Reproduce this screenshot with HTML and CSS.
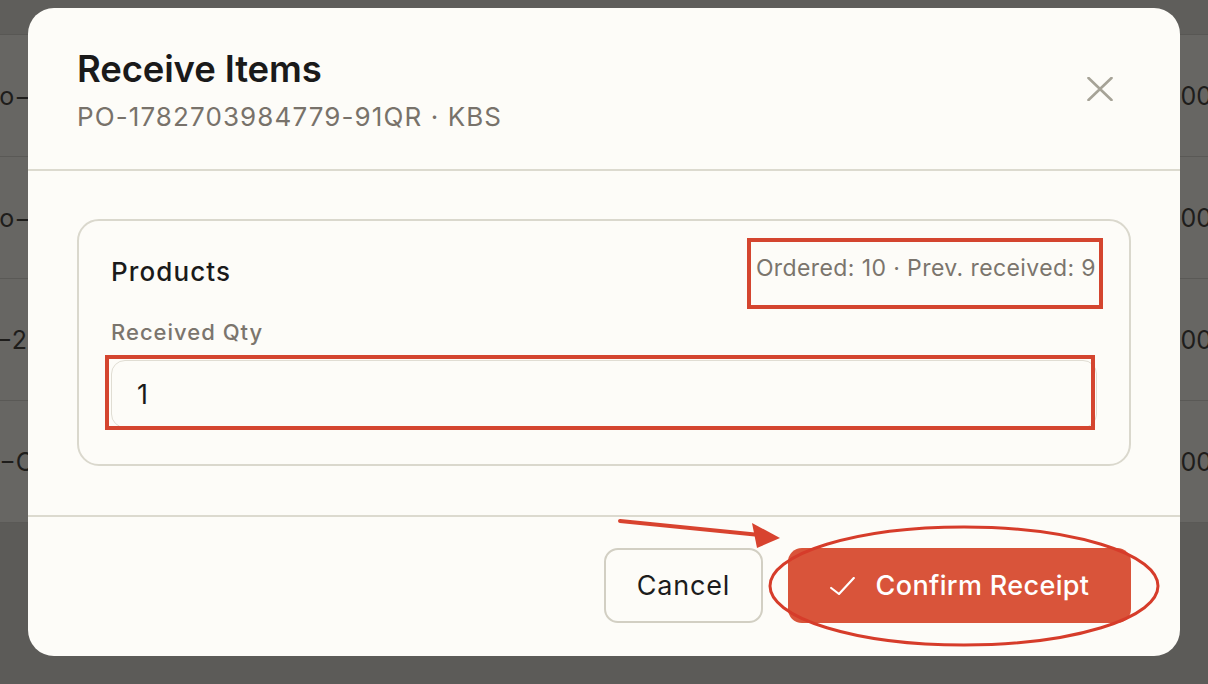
FILE: index.html
```html
<!DOCTYPE html>
<html lang="en">
<head>
<meta charset="utf-8">
<title>Receive Items</title>
<link rel="stylesheet" href="styles.css">
</head>
<body>
<div class="page">
  <div class="table-top"></div>
  <div class="row"><span class="cell-left">po−9</span><span class="cell-right">00</span></div>
  <div class="row"><span class="cell-left">po−W</span><span class="cell-right">00</span></div>
  <div class="row"><span class="cell-left">L−2</span><span class="cell-right">00</span></div>
  <div class="row"><span class="cell-left">5−C</span><span class="cell-right">00</span></div>
</div>

<div class="modal">
  <header class="modal-header">
    <div class="titles">
      <h1 class="title">Receive Items</h1>
      <div class="subtitle">PO-1782703984779-91QR · KBS</div>
    </div>
    <button class="close" aria-label="Close">
      <svg width="26" height="24" viewBox="0 0 26 24"><path d="M1.5 1 L24.5 23 M24.5 1 L1.5 23" stroke="#a6a397" stroke-width="2.6" stroke-linecap="round" fill="none"/></svg>
    </button>
  </header>
  <section class="modal-body">
    <div class="card">
      <div class="card-head">
        <span class="card-title">Products</span>
        <span class="card-meta">Ordered: 10 · Prev. received: 9</span>
      </div>
      <label class="field-label">Received Qty</label>
      <div class="input">1</div>
    </div>
  </section>
  <footer class="modal-footer">
    <button class="btn btn-cancel">Cancel</button>
    <button class="btn btn-confirm">
      <svg width="25" height="18" viewBox="0 0 25 18"><path d="M1.2 11 L9 17 L23.8 1" stroke="#fff" stroke-width="2.2" fill="none" stroke-linecap="round" stroke-linejoin="round"/></svg>
      <span>Confirm Receipt</span>
    </button>
  </footer>
</div>

<svg class="annotations" width="1208" height="684" viewBox="0 0 1208 684">
  <rect x="749" y="240" width="352" height="67" fill="none" stroke="#d4452f" stroke-width="4"/>
  <rect x="107" y="357" width="986" height="71" fill="none" stroke="#d4452f" stroke-width="4"/>
  <ellipse cx="964" cy="586" rx="194" ry="59" fill="none" stroke="#d63c2a" stroke-width="3"/>
  <line x1="620" y1="521" x2="760" y2="535" stroke="#d8432f" stroke-width="4" stroke-linecap="round"/>
  <polygon points="752,523 780,538 757,548" fill="#d8432f"/>
</svg>
</body>
</html>
```
FILE: styles.css
```css
* { box-sizing: border-box; }
html, body {
  margin: 0;
  padding: 0;
  width: 1208px;
  height: 684px;
  overflow: hidden;
  font-family: "Inter", "Noto Sans", sans-serif;
}
body { position: relative; background: #5c5b58; }

.page {
  display: flex;
  flex-direction: column;
}
.table-top {
  height: 35px;
  background: #5f5e5b;
  border-bottom: 1px solid #585754;
}
.row {
  height: 122px;
  background: #676663;
  border-bottom: 1px solid #5a5956;
  display: flex;
  justify-content: space-between;
  align-items: center;
  font-size: 25px;
  color: #1e1d1b;
}
.cell-left { margin-left: -16px; }
.cell-right { margin-right: -4px; }

.modal {
  position: absolute;
  left: 28px;
  top: 8px;
  width: 1152px;
  height: 648px;
  background: #fdfcf8;
  border-radius: 26px;
  display: flex;
  flex-direction: column;
  overflow: hidden;
}
.modal-header {
  height: 163px;
  flex: none;
  padding: 39px 49px 0 49px;
  border-bottom: 2px solid #dcdacf;
  display: flex;
  justify-content: space-between;
  align-items: flex-start;
}
.title {
  margin: 0;
  font-size: 36.5px;
  font-weight: 600;
  color: #1a1a1a;
  line-height: 44px;
  letter-spacing: -0.15px;
}
.subtitle {
  margin-top: 11px;
  font-size: 26px;
  color: #78726a;
  line-height: 30px;
  letter-spacing: 1.1px;
}
.close {
  border: 0;
  background: none;
  padding: 0;
  margin: 30px 18px 0 0;
  width: 26px;
  height: 24px;
  cursor: pointer;
}
.modal-body {
  height: 346px;
  flex: none;
  padding: 48px 49px 0 49px;
  border-bottom: 2px solid #dcdacf;
}
.card {
  height: 247px;
  border: 2px solid #dad8cd;
  border-radius: 22px;
  padding: 35px 32px 0 32px;
}
.card-head {
  display: flex;
  justify-content: space-between;
  align-items: flex-start;
  height: 32px;
}
.card-title {
  font-size: 26px;
  line-height: 32px;
  font-weight: 500;
  color: #1a1a1a;
  letter-spacing: 1.1px;
}
.card-meta {
  font-size: 23px;
  line-height: 32px;
  color: #7b756d;
  margin-top: -4px;
  margin-right: 1px;
  letter-spacing: 0.4px;
}
.field-label {
  display: block;
  margin-top: 30px;
  font-size: 22px;
  font-weight: 500;
  color: #7b756d;
  line-height: 28px;
  letter-spacing: 1px;
}
.input {
  margin-top: 14px;
  height: 68px;
  border: 1px solid #e0ddd3;
  border-radius: 14px;
  padding: 0 25px;
  display: flex;
  align-items: center;
  font-size: 27px;
  color: #1a1a1a;
  background: #fdfcf8;
}
.modal-footer {
  flex: 1;
  display: flex;
  justify-content: flex-end;
  align-items: center;
  gap: 25px;
  padding: 0 49px 2px 49px;
}
.btn {
  height: 75px;
  border-radius: 14px;
  font-family: "Inter", "Noto Sans", sans-serif;
  font-size: 27px;
  display: flex;
  align-items: center;
  justify-content: center;
}
.btn-cancel {
  width: 159px;
  border: 2px solid #d2cfc3;
  background: #fdfcf8;
  color: #1c1c1c;
  letter-spacing: 0.8px;
}
.btn-confirm {
  width: 343px;
  border: 0;
  background: #d9543a;
  color: #fff;
  gap: 21px;
  font-weight: 500;
  letter-spacing: 0.35px;
}
.annotations {
  position: absolute;
  left: 0;
  top: 0;
  pointer-events: none;
}
```
